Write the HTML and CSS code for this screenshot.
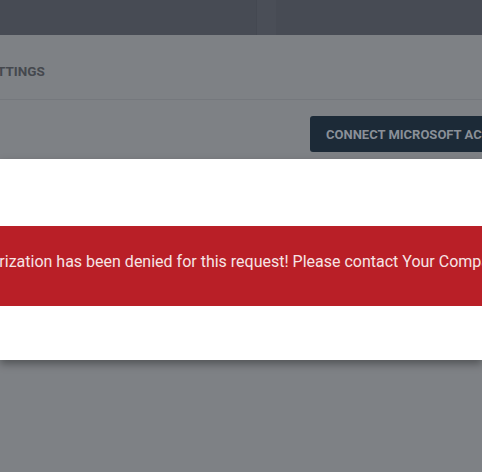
FILE: index.html
```html
<!DOCTYPE html>
<html>
<head>
<meta charset="utf-8">
<link rel="stylesheet" href="styles.css">
</head>
<body>
<div class="topbar">
  <div class="top-left"></div>
  <div class="top-divider"></div>
  <div class="top-right"></div>
</div>
<div class="section-head"><span class="section-title">SETTINGS</span></div>
<div class="toolbar">
  <button class="connect-btn">CONNECT MICROSOFT ACCOUNT</button>
</div>
<div class="modal">
  <div class="alert"><span class="alert-text">Authorization has been denied for this request! Please contact Your Company Administrator.</span></div>
</div>
</body>
</html>
```
FILE: styles.css
```css
html, body {
  margin: 0;
  padding: 0;
}
body {
  width: 482px;
  height: 472px;
  overflow: hidden;
  background: #7e8185;
  font-family: Roboto, "Liberation Sans", sans-serif;
}
.topbar {
  height: 35px;
  display: flex;
  background: #474b54;
}
.top-left {
  width: 256px;
}
.top-divider {
  width: 19px;
  background: #4a4e57;
  border-left: 1px solid #444851;
}
.top-right {
  flex: 1;
}
.section-head {
  height: 65px;
  box-sizing: border-box;
  padding-top: 8px;
  border-bottom: 1px solid #75787d;
  display: flex;
  align-items: center;
  overflow: hidden;
}
.section-title {
  margin-left: -19px;
  font-size: 13.5px;
  font-weight: 700;
  color: #45484e;
  white-space: nowrap;
}
.toolbar {
  padding-top: 16px;
  padding-left: 310px;
  height: 36px;
  overflow: hidden;
  white-space: nowrap;
}
.connect-btn {
  height: 36px;
  padding: 0 16px;
  border: none;
  border-radius: 3px;
  background: #1c2a37;
  color: #8a9098;
  font-family: Roboto, "Liberation Sans", sans-serif;
  font-size: 13px;
  font-weight: 700;
  white-space: nowrap;
}
.modal {
  margin-top: 7px;
  height: 201px;
  background: #ffffff;
  padding-top: 67px;
  box-sizing: border-box;
  box-shadow: 0 4px 8px rgba(0, 0, 0, 0.35);
}
.alert {
  height: 80px;
  box-sizing: border-box;
  padding-bottom: 9px;
  background: #b91f27;
  display: flex;
  align-items: center;
  overflow: hidden;
  white-space: nowrap;
}
.alert-text {
  margin-left: -43px;
  font-size: 16px;
  color: #f6e4e5;
}
```
